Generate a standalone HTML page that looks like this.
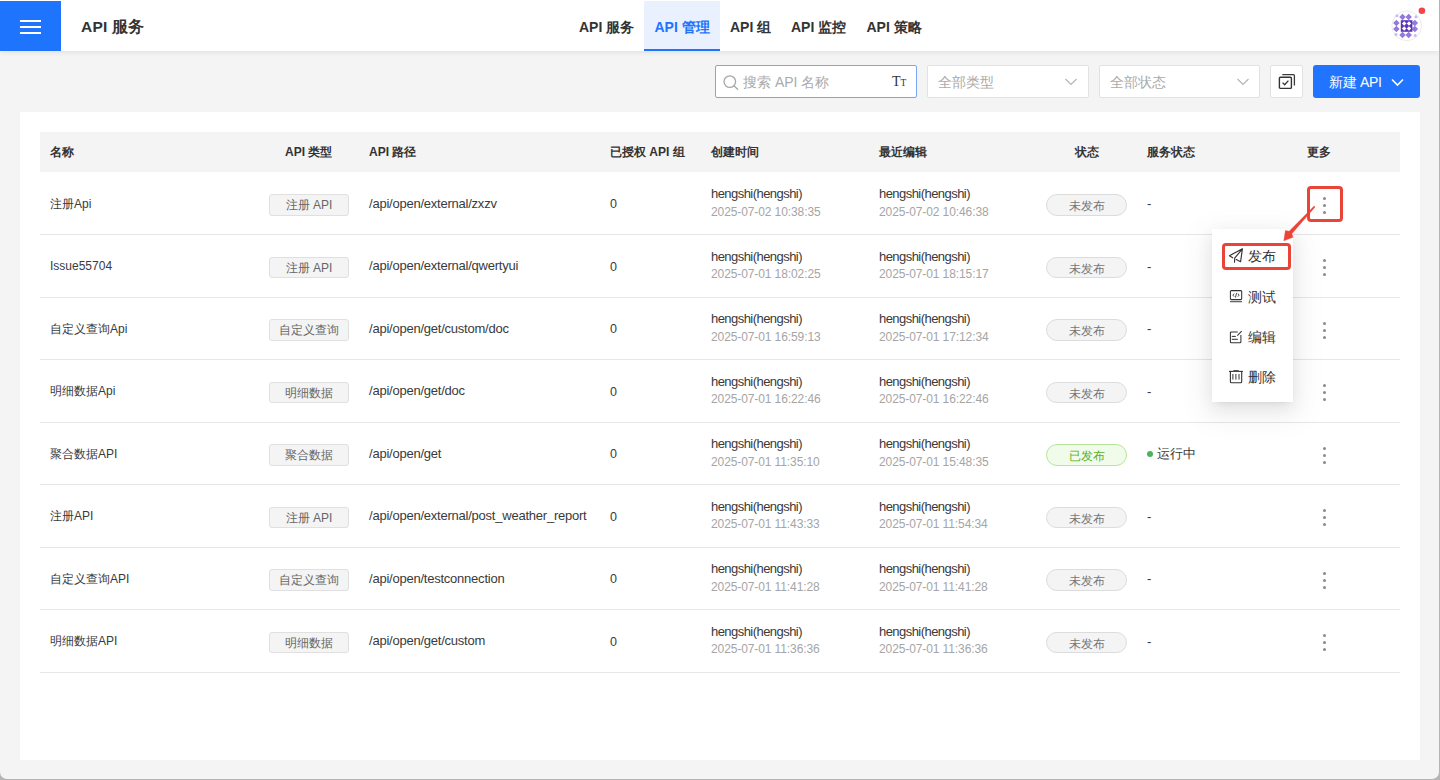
<!DOCTYPE html>
<html><head><meta charset="utf-8">
<style>
html,body{margin:0;padding:0;width:1440px;height:780px;overflow:hidden;background:#b4b4b4;}
*{box-sizing:border-box;}
body{font-family:"Liberation Sans",sans-serif;color:#333;}
#app{position:absolute;left:0;top:0;width:1439px;height:779px;background:#f4f4f4;border-radius:0 0 7px 7px;overflow:hidden;}
.abs{position:absolute;white-space:nowrap;}
#hdr{position:absolute;left:0;top:0;width:1439px;height:51px;background:#fff;box-shadow:0 1px 6px rgba(0,0,0,0.09);}
#burger{position:absolute;left:0;top:1px;width:60.5px;height:50px;background:#1f74fe;}
#burger i{position:absolute;left:20px;width:21px;height:2px;background:#fff;}
#title{left:81px;top:16.5px;font-size:15.5px;letter-spacing:0.2px;font-weight:bold;color:#333;line-height:20px;}
.tab{position:absolute;top:1px;height:50px;font-size:14px;font-weight:bold;color:#333;line-height:52.5px;padding:0 10.5px;}
.tab.act{background:#e9f1ff;color:#1f74fe;box-shadow:inset 0 -2px 0 #1f74fe;}
.card{position:absolute;left:20px;top:112px;width:1400px;height:648px;background:#fff;}
.th{position:absolute;left:40px;top:132px;width:1360px;height:40px;background:#f4f4f4;}
.hcell{position:absolute;top:132px;line-height:40px;font-size:12px;font-weight:bold;color:#333;white-space:nowrap;}
.row{position:absolute;left:40px;width:1360px;height:62.5px;}
.ln{position:absolute;left:40px;width:1360px;height:1px;background:#e6e6e6;}
.cell{position:absolute;font-size:12.5px;color:#3a3a3a;white-space:nowrap;}
.tag{position:absolute;left:229px;width:80px;height:21.5px;background:#f4f4f4;border:1px solid #e0e0e0;border-radius:3px;font-size:12px;color:#666;text-align:center;line-height:21px;}
.pill{position:absolute;left:1006px;width:81px;height:21.5px;background:#f4f4f4;border:1px solid #dcdcdc;border-radius:11px;font-size:12.5px;color:#777;text-align:center;line-height:19.5px;}
.pill.ok{background:#f1fbe9;border-color:#b7e69a;color:#5cb02b;}
.dots{position:absolute;left:1283px;width:3px;}
.dots i{position:absolute;left:-0.3px;width:3.2px;height:3.2px;border-radius:50%;background:#8a8a8a;}
.inp{position:absolute;top:65px;height:32.5px;background:#fff;border:1px solid #e2e2e2;border-radius:2px;}
.ph{position:absolute;font-size:14px;color:#aaa;white-space:nowrap;line-height:16px;}

.nm{left:10px;top:23.7px;font-size:12px;line-height:16px;letter-spacing:0px;}
.tag{top:22px;}
.pill{top:22px;font-size:12px;line-height:22px;}
.pth{left:329px;top:23.8px;font-size:13px;line-height:16px;letter-spacing:-0.23px;}
.zero{left:570px;top:24px;font-size:12.5px;line-height:16px;}
.u1{left:671px;top:14px;font-size:13px;line-height:16px;letter-spacing:-0.55px;}
.d1{left:671px;top:31.5px;font-size:12px;line-height:16px;color:#a5a5a5;letter-spacing:-0.1px;}
.u2{left:839px;top:14px;font-size:13px;line-height:16px;letter-spacing:-0.55px;}
.d2{left:839px;top:31.5px;font-size:12px;line-height:16px;color:#a5a5a5;letter-spacing:-0.1px;}
.svc{left:1107px;top:24px;font-size:13px;line-height:16px;}
.gdot{display:inline-block;width:6px;height:6px;border-radius:50%;background:#4cb45e;margin-right:4px;vertical-align:1px;}
.dots{top:24.7px;}

.menu-t{position:absolute;left:1248px;font-size:14px;line-height:16px;color:#333;}
</style></head><body>
<div id="app">
  <div id="hdr">
    <div id="burger"><i style="top:19px"></i><i style="top:25px"></i><i style="top:31px"></i></div>
    <div id="title" class="abs">API 服务</div>
    <div class="tab" style="left:568.5px">API 服务</div>
    <div class="tab act" style="left:644px">API 管理</div>
    <div class="tab" style="left:719.5px">API 组</div>
    <div class="tab" style="left:780.5px">API 监控</div>
    <div class="tab" style="left:856px">API 策略</div>
  </div>
  <div class="inp" style="left:715px;width:202px;border-color:#78a6f5;"></div>
  <div class="inp" style="left:927px;width:161.5px;"></div>
  <div class="inp" style="left:1099px;width:161px;"></div>
  <div class="inp" style="left:1270px;width:32.5px;"></div>
  <div class="abs" style="left:1313px;top:65px;width:107px;height:32.5px;background:#2074ff;border-radius:3px;"></div>
  <div class="card"></div>
  <div class="th"></div>
  <div class="hcell" style="left:50px">名称</div>
  <div class="hcell" style="left:285px">API 类型</div>
  <div class="hcell" style="left:369px">API 路径</div>
  <div class="hcell" style="left:610px">已授权 API 组</div>
  <div class="hcell" style="left:711px">创建时间</div>
  <div class="hcell" style="left:879px">最近编辑</div>
  <div class="hcell" style="left:1075px">状态</div>
  <div class="hcell" style="left:1147px">服务状态</div>
  <div class="hcell" style="left:1307px">更多</div>
  <div class="ln" style="top:234px"></div><div class="ln" style="top:297px"></div><div class="ln" style="top:359px"></div><div class="ln" style="top:422px"></div><div class="ln" style="top:484px"></div><div class="ln" style="top:547px"></div><div class="ln" style="top:609px"></div><div class="ln" style="top:672px"></div>
  <div class="row" style="top:172.0px">
    <div class="cell nm">注册Api</div>
    <div class="tag">注册 API</div>
    <div class="cell pth">/api/open/external/zxzv</div>
    <div class="cell zero">0</div>
    <div class="cell u1">hengshi(hengshi)</div><div class="cell d1">2025-07-02 10:38:35</div>
    <div class="cell u2">hengshi(hengshi)</div><div class="cell d2">2025-07-02 10:46:38</div>
    <div class="pill">未发布</div>
    <div class="cell svc">-</div>
    <div class="dots"><i style="top:0"></i><i style="top:7px"></i><i style="top:14px"></i></div>
  </div>
  <div class="row" style="top:234.5px">
    <div class="cell nm">Issue55704</div>
    <div class="tag">注册 API</div>
    <div class="cell pth">/api/open/external/qwertyui</div>
    <div class="cell zero">0</div>
    <div class="cell u1">hengshi(hengshi)</div><div class="cell d1">2025-07-01 18:02:25</div>
    <div class="cell u2">hengshi(hengshi)</div><div class="cell d2">2025-07-01 18:15:17</div>
    <div class="pill">未发布</div>
    <div class="cell svc">-</div>
    <div class="dots"><i style="top:0"></i><i style="top:7px"></i><i style="top:14px"></i></div>
  </div>
  <div class="row" style="top:297.0px">
    <div class="cell nm">自定义查询Api</div>
    <div class="tag">自定义查询</div>
    <div class="cell pth">/api/open/get/custom/doc</div>
    <div class="cell zero">0</div>
    <div class="cell u1">hengshi(hengshi)</div><div class="cell d1">2025-07-01 16:59:13</div>
    <div class="cell u2">hengshi(hengshi)</div><div class="cell d2">2025-07-01 17:12:34</div>
    <div class="pill">未发布</div>
    <div class="cell svc">-</div>
    <div class="dots"><i style="top:0"></i><i style="top:7px"></i><i style="top:14px"></i></div>
  </div>
  <div class="row" style="top:359.5px">
    <div class="cell nm">明细数据Api</div>
    <div class="tag">明细数据</div>
    <div class="cell pth">/api/open/get/doc</div>
    <div class="cell zero">0</div>
    <div class="cell u1">hengshi(hengshi)</div><div class="cell d1">2025-07-01 16:22:46</div>
    <div class="cell u2">hengshi(hengshi)</div><div class="cell d2">2025-07-01 16:22:46</div>
    <div class="pill">未发布</div>
    <div class="cell svc">-</div>
    <div class="dots"><i style="top:0"></i><i style="top:7px"></i><i style="top:14px"></i></div>
  </div>
  <div class="row" style="top:422.0px">
    <div class="cell nm">聚合数据API</div>
    <div class="tag">聚合数据</div>
    <div class="cell pth">/api/open/get</div>
    <div class="cell zero">0</div>
    <div class="cell u1">hengshi(hengshi)</div><div class="cell d1">2025-07-01 11:35:10</div>
    <div class="cell u2">hengshi(hengshi)</div><div class="cell d2">2025-07-01 15:48:35</div>
    <div class="pill ok">已发布</div>
    <div class="cell svc"><i class="gdot"></i>运行中</div>
    <div class="dots"><i style="top:0"></i><i style="top:7px"></i><i style="top:14px"></i></div>
  </div>
  <div class="row" style="top:484.5px">
    <div class="cell nm">注册API</div>
    <div class="tag">注册 API</div>
    <div class="cell pth">/api/open/external/post_weather_report</div>
    <div class="cell zero">0</div>
    <div class="cell u1">hengshi(hengshi)</div><div class="cell d1">2025-07-01 11:43:33</div>
    <div class="cell u2">hengshi(hengshi)</div><div class="cell d2">2025-07-01 11:54:34</div>
    <div class="pill">未发布</div>
    <div class="cell svc">-</div>
    <div class="dots"><i style="top:0"></i><i style="top:7px"></i><i style="top:14px"></i></div>
  </div>
  <div class="row" style="top:547.0px">
    <div class="cell nm">自定义查询API</div>
    <div class="tag">自定义查询</div>
    <div class="cell pth">/api/open/testconnection</div>
    <div class="cell zero">0</div>
    <div class="cell u1">hengshi(hengshi)</div><div class="cell d1">2025-07-01 11:41:28</div>
    <div class="cell u2">hengshi(hengshi)</div><div class="cell d2">2025-07-01 11:41:28</div>
    <div class="pill">未发布</div>
    <div class="cell svc">-</div>
    <div class="dots"><i style="top:0"></i><i style="top:7px"></i><i style="top:14px"></i></div>
  </div>
  <div class="row" style="top:609.5px">
    <div class="cell nm">明细数据API</div>
    <div class="tag">明细数据</div>
    <div class="cell pth">/api/open/get/custom</div>
    <div class="cell zero">0</div>
    <div class="cell u1">hengshi(hengshi)</div><div class="cell d1">2025-07-01 11:36:36</div>
    <div class="cell u2">hengshi(hengshi)</div><div class="cell d2">2025-07-01 11:36:36</div>
    <div class="pill">未发布</div>
    <div class="cell svc">-</div>
    <div class="dots"><i style="top:0"></i><i style="top:7px"></i><i style="top:14px"></i></div>
  </div>
  <!-- toolbar contents -->
  <svg class="abs" style="left:722px;top:74px" width="18" height="18" viewBox="0 0 18 18"><circle cx="7.8" cy="7.6" r="5.8" fill="none" stroke="#a8a8a8" stroke-width="1.3"/><line x1="12" y1="11.8" x2="15.6" y2="15.2" stroke="#a8a8a8" stroke-width="1.4" stroke-linecap="round"/></svg>
  <div class="ph" style="left:743px;top:73.5px">搜索 API 名称</div>
  <div class="abs" style="left:892px;top:72px;font-family:'Liberation Serif',serif;color:#333;line-height:18px;"><span style="font-size:14px">T</span><span style="font-size:9.5px">T</span></div>
  <div class="ph" style="left:938px;top:73.5px">全部类型</div>
  <svg class="abs" style="left:1064px;top:77px" width="14" height="10" viewBox="0 0 14 10"><polyline points="1.5,2 7,7.5 12.5,2" fill="none" stroke="#b5b5b5" stroke-width="1.2"/></svg>
  <div class="ph" style="left:1110px;top:73.5px">全部状态</div>
  <svg class="abs" style="left:1236px;top:77px" width="14" height="10" viewBox="0 0 14 10"><polyline points="1.5,2 7,7.5 12.5,2" fill="none" stroke="#b5b5b5" stroke-width="1.2"/></svg>
  <svg class="abs" style="left:1277px;top:70.5px" width="20" height="20" viewBox="0 0 20 20"><path d="M5.3 3.6 H16.4 a1 1 0 0 1 1 1 V14.6" fill="none" stroke="#3a3a3a" stroke-width="1.3"/><rect x="2.4" y="6.2" width="12" height="11.2" rx="1" fill="#fff" stroke="#333" stroke-width="1.4"/><polyline points="5.5,11.6 7.7,13.7 11.4,9.6" fill="none" stroke="#333" stroke-width="1.3"/></svg>
  <div class="abs" style="left:1329px;top:72.5px;font-size:14px;color:#fff;line-height:18px;letter-spacing:-0.3px;">新建 API</div>
  <svg class="abs" style="left:1390px;top:76px" width="15" height="12" viewBox="0 0 15 12"><polyline points="2,3.5 7.5,9 13,3.5" fill="none" stroke="#fff" stroke-width="1.6"/></svg>
  <!-- avatar -->
  <svg class="abs" style="left:1390px;top:0px" width="40" height="48" viewBox="0 -9 40 48">
    <circle cx="16.7" cy="16.8" r="14.8" fill="#fff" stroke="#e6e6e6" stroke-width="0.8"/>
    <g fill="#9479dc">
      <rect x="10.2" y="5.6" width="4.6" height="4.6" transform="rotate(45 12.5 7.9)"/>
      <rect x="16.4" y="5.6" width="4.6" height="4.6" transform="rotate(45 18.7 7.9)"/>
      <rect x="10.2" y="23.6" width="4.6" height="4.6" transform="rotate(45 12.5 25.9)"/>
      <rect x="16.4" y="23.6" width="4.6" height="4.6" transform="rotate(45 18.7 25.9)"/>
      <rect x="4.1" y="11.6" width="4.6" height="4.6" transform="rotate(45 6.4 13.9)"/>
      <rect x="4.1" y="17.8" width="4.6" height="4.6" transform="rotate(45 6.4 20.1)"/>
      <rect x="22.5" y="11.6" width="4.6" height="4.6" transform="rotate(45 24.8 13.9)"/>
      <rect x="22.5" y="17.8" width="4.6" height="4.6" transform="rotate(45 24.8 20.1)"/>
    </g>
    <g fill="#c9bbef"><circle cx="7" cy="6.8" r="1.5"/><circle cx="26" cy="7.8" r="1.6"/><circle cx="6" cy="25.5" r="1.5"/><circle cx="25.2" cy="26.5" r="1.5"/></g>
    <rect x="10.8" y="11.2" width="11.6" height="11.6" fill="#5a35b8"/>
    <g fill="#fff"><rect x="12.6" y="13" width="3.2" height="3.2" transform="rotate(45 14.2 14.6)"/><rect x="17.4" y="13" width="3.2" height="3.2" transform="rotate(45 19 14.6)"/><rect x="12.6" y="17.8" width="3.2" height="3.2" transform="rotate(45 14.2 19.4)"/><rect x="17.4" y="17.8" width="3.2" height="3.2" transform="rotate(45 19 19.4)"/></g>
    <circle cx="31.9" cy="1.8" r="3.3" fill="#f5434a"/>
  </svg>
  <!-- dropdown menu -->
  <div class="abs" style="left:1212px;top:229px;width:81px;height:173px;background:#fff;box-shadow:0 3px 6px -4px rgba(0,0,0,0.12),0 6px 16px 0 rgba(0,0,0,0.08),0 9px 28px 8px rgba(0,0,0,0.05);"></div>
  <div class="menu-t" style="top:248px">发布</div>
  <div class="menu-t" style="top:288.5px">测试</div>
  <div class="menu-t" style="top:328.5px">编辑</div>
  <div class="menu-t" style="top:369px">删除</div>
  <svg class="abs" style="left:1228px;top:248px" width="16" height="16" viewBox="0 0 16 16"><path d="M4.7 9.8 L1.4 7.8 L14.4 0.8 L12.6 13.7 L8.3 11.6 M14.4 0.8 L6.7 10.1 L6.5 14.2" fill="none" stroke="#333" stroke-width="1.15" stroke-linejoin="round" stroke-linecap="round"/></svg>
  <svg class="abs" style="left:1228px;top:289px" width="16" height="16" viewBox="0 0 16 16"><rect x="2.4" y="1.6" width="11.3" height="9" rx="1" fill="none" stroke="#333" stroke-width="1.05"/><line x1="2" y1="12.7" x2="14" y2="12.7" stroke="#444" stroke-width="1.05"/><path d="M6.1 4.6 L4.9 6.1 L6.1 7.6 M9.9 4.6 L11.1 6.1 L9.9 7.6 M8.6 4.1 L7.4 8.6" fill="none" stroke="#333" stroke-width="0.9"/></svg>
  <svg class="abs" style="left:1228px;top:329px" width="16" height="16" viewBox="0 0 16 16"><path d="M9.8 2.9 H3.4 a1 1 0 0 0 -1 1 V12.7 a1 1 0 0 0 1 1 H11.9 a1 1 0 0 0 1 -1 V6" fill="none" stroke="#333" stroke-width="1.05"/><line x1="3.8" y1="7.4" x2="7.8" y2="7.4" stroke="#333" stroke-width="1.05"/><line x1="3.8" y1="10.3" x2="9.8" y2="10.3" stroke="#333" stroke-width="1.05"/><line x1="9.3" y1="6.6" x2="13.7" y2="2.1" stroke="#333" stroke-width="1.05"/></svg>
  <svg class="abs" style="left:1228px;top:369px" width="16" height="16" viewBox="0 0 16 16"><line x1="1" y1="2.4" x2="14.9" y2="2.4" stroke="#333" stroke-width="1.1"/><path d="M4.8 2.4 L5.6 0.9 H10.5 L11.3 2.4 Z" fill="#555"/><path d="M2.4 2.4 V12.7 a1 1 0 0 0 1 1 H12.7 a1 1 0 0 0 1 -1 V2.4" fill="none" stroke="#333" stroke-width="1.1"/><line x1="4.9" y1="5" x2="4.9" y2="10.6" stroke="#333" stroke-width="1"/><line x1="7.9" y1="5" x2="7.9" y2="10.6" stroke="#333" stroke-width="1"/><line x1="11" y1="5" x2="11" y2="10.6" stroke="#333" stroke-width="1"/></svg>
  <!-- annotations -->
  <div class="abs" style="left:1307px;top:186.3px;width:36px;height:35.7px;border:3px solid #ea4439;border-radius:4px;"></div>
  <div class="abs" style="left:1221.8px;top:242.8px;width:69px;height:27.2px;border:3px solid #ea4439;border-radius:4px;"></div>
  <svg class="abs" style="left:1270px;top:195px" width="60" height="60" viewBox="1270 195 60 60"><path d="M1314.15 206.1 L1289.16 231.3 L1285.4 230.4 L1283.8 240.8 L1293 237.3 L1291.84 233.7 L1315.05 206.9 Z" fill="#ec4238" stroke="#ec4238" stroke-width="0.4" stroke-linejoin="round"/></svg>
</div>
</body></html>
